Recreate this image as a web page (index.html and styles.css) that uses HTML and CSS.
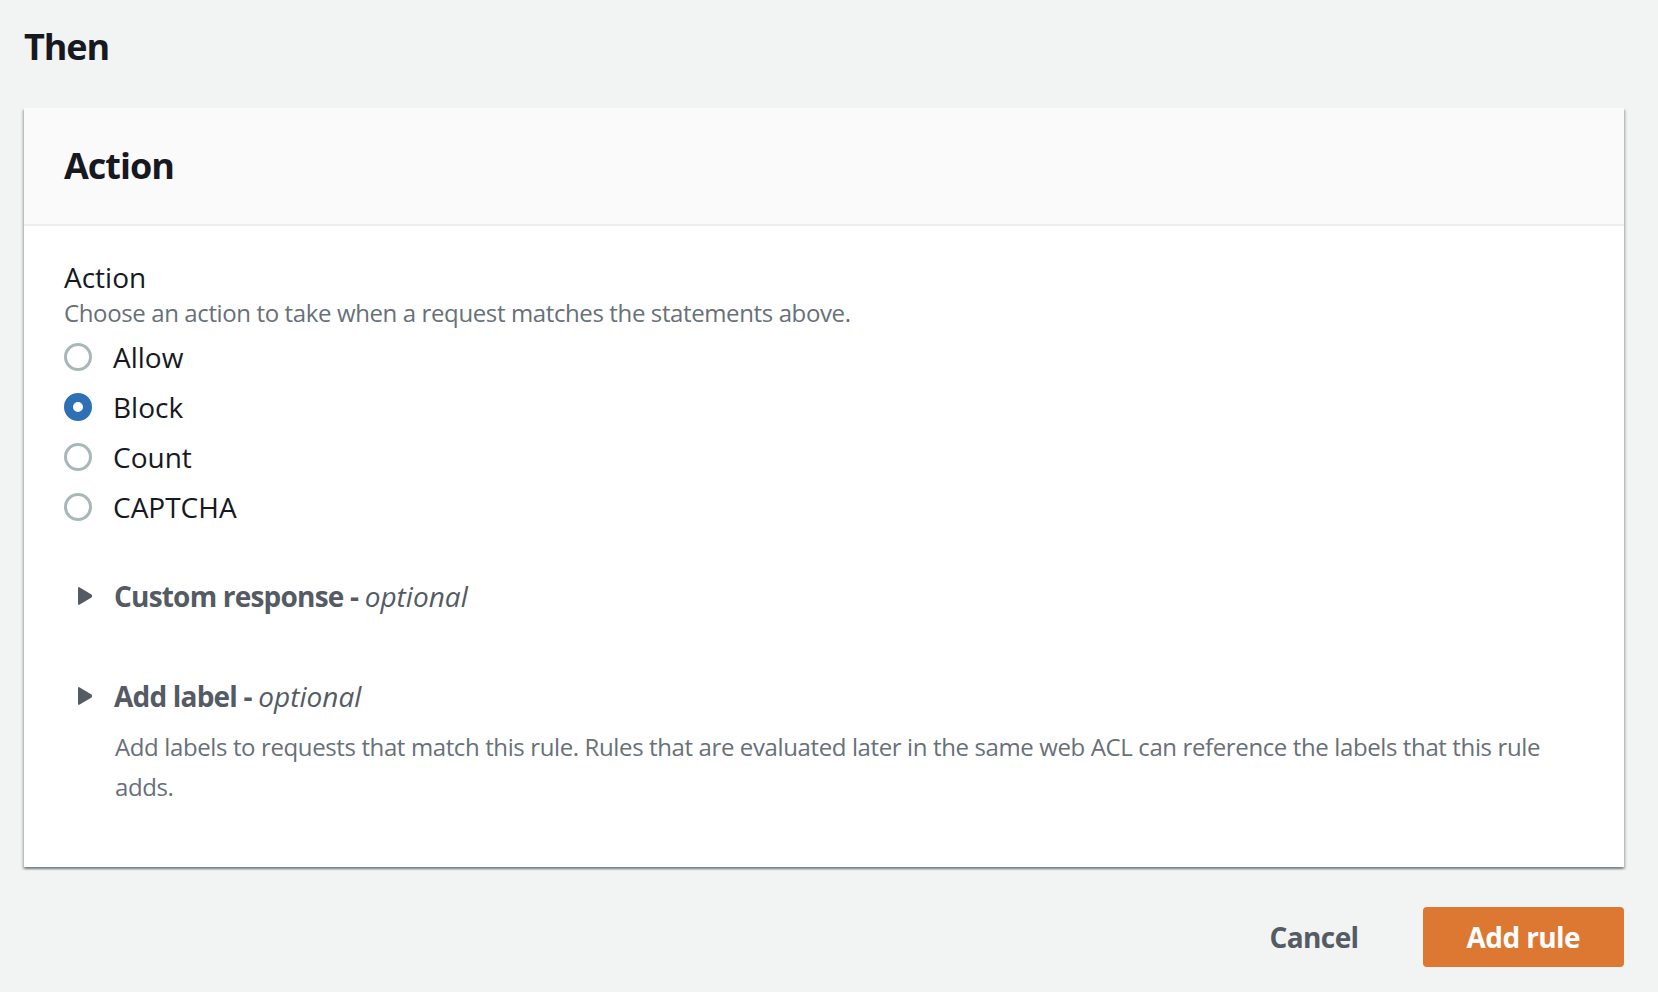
FILE: index.html
```html
<!DOCTYPE html>
<html lang="en">
<head>
<meta charset="utf-8">
<title>Then - Action</title>
<link rel="stylesheet" href="styles.css">
</head>
<body>
<div class="page">
  <h1 class="page-title">Then</h1>
  <section class="card">
    <header class="card-header">
      <h2 class="card-title">Action</h2>
    </header>
    <div class="card-body">
      <div class="field">
        <div class="field-label">Action</div>
        <div class="field-desc">Choose an action to take when a request matches the statements above.</div>
        <div class="radio-group">
          <label class="radio"><span class="radio-circle"></span><span class="radio-text">Allow</span></label>
          <label class="radio"><span class="radio-circle checked"></span><span class="radio-text">Block</span></label>
          <label class="radio"><span class="radio-circle"></span><span class="radio-text">Count</span></label>
          <label class="radio"><span class="radio-circle"></span><span class="radio-text">CAPTCHA</span></label>
        </div>
      </div>
      <div class="expander first">
        <div class="expander-head">
          <svg class="caret" width="16" height="20" viewBox="0 0 16 20"><path d="M1 2.4 Q1 0.5 2.7 1.4 L14.5 8.6 Q15.9 10 14.5 11.4 L2.7 18.6 Q1 19.5 1 17.6 Z" fill="#545b64"/></svg>
          <span class="expander-title">Custom response - <em>optional</em></span>
        </div>
      </div>
      <div class="expander second">
        <div class="expander-head">
          <svg class="caret" width="16" height="20" viewBox="0 0 16 20"><path d="M1 2.4 Q1 0.5 2.7 1.4 L14.5 8.6 Q15.9 10 14.5 11.4 L2.7 18.6 Q1 19.5 1 17.6 Z" fill="#545b64"/></svg>
          <span class="expander-title">Add label - <em>optional</em></span>
        </div>
        <p class="expander-desc">Add labels to requests that match this rule. Rules that are evaluated later in the same web ACL can reference the labels that this rule adds.</p>
      </div>
    </div>
  </section>
  <div class="actions">
    <button class="btn btn-link">Cancel</button>
    <button class="btn btn-primary">Add rule</button>
  </div>
</div>
</body>
</html>
```
FILE: styles.css
```css
html, body {
  margin: 0;
  padding: 0;
  background: #f2f3f3;
}
body {
  font-family: "Open Sans", "Noto Sans", Arial, sans-serif;
  color: #16191f;
}
.page {
  padding: 25px 34px 0 24px;
}
.page-title {
  margin: 0;
  font-size: 36px;
  line-height: 44px;
  font-weight: 700;
  letter-spacing: -1.1px;
  color: #16191f;
}
.card {
  margin-top: 39px;
  background: #ffffff;
  box-shadow: 0 2px 2px 0 rgba(0, 28, 36, 0.35), 2px 2px 2px 0 rgba(0, 28, 36, 0.15), -2px 2px 2px 0 rgba(0, 28, 36, 0.15);
}
.card-header {
  background: #fafafa;
  border-bottom: 2px solid #eaeded;
  padding: 36px 40px;
}
.card-title {
  margin: 0;
  font-size: 36px;
  line-height: 44px;
  font-weight: 700;
  letter-spacing: -1px;
  color: #16191f;
}
.card-body {
  padding: 31px 40px 60px 40px;
}
.field-label {
  font-size: 28px;
  line-height: 40px;
  color: #16191f;
}
.field-desc {
  font-size: 24px;
  line-height: 32px;
  letter-spacing: -0.38px;
  color: #687078;
}
.radio-group {
  margin-top: 8px;
  display: flex;
  flex-direction: column;
  gap: 10px;
}
.radio {
  display: flex;
  align-items: center;
  height: 40px;
  gap: 21px;
}
.radio-circle {
  box-sizing: border-box;
  width: 28px;
  height: 28px;
  border-radius: 50%;
  border: 3px solid #aab7b8;
  background: #fff;
  flex: none;
}
.radio-circle.checked {
  border: 9px solid #2e6fb6;
  background: #fff;
}
.radio-text {
  font-size: 28px;
  line-height: 40px;
  color: #16191f;
}
.expander.first {
  margin-top: 49px;
}
.expander.second {
  margin-top: 60px;
}
.expander-head {
  display: flex;
  align-items: center;
  padding-left: 13px;
  gap: 21px;
  height: 40px;
}
.caret {
  flex: none;
}
.expander-title {
  font-size: 28px;
  line-height: 40px;
  font-weight: 700;
  letter-spacing: -0.8px;
  color: #545b64;
}
.expander-title em {
  font-weight: 400;
  font-style: italic;
  letter-spacing: 0;
}
.expander-desc {
  margin: 11px 0 0 51px;
  font-size: 24px;
  line-height: 40px;
  letter-spacing: -0.38px;
  color: #687078;
}
.actions {
  margin-top: 40px;
  display: flex;
  justify-content: flex-end;
  align-items: center;
  gap: 24px;
}
.btn {
  font-family: inherit;
  font-size: 28px;
  font-weight: 700;
  letter-spacing: -0.6px;
  height: 60px;
  border: none;
  border-radius: 4px;
  cursor: pointer;
}
.btn-link {
  background: transparent;
  color: #545b64;
  padding: 0 40px;
}
.btn-primary {
  background: #dd7833;
  color: #ffffff;
  padding: 0 44px;
}
```
